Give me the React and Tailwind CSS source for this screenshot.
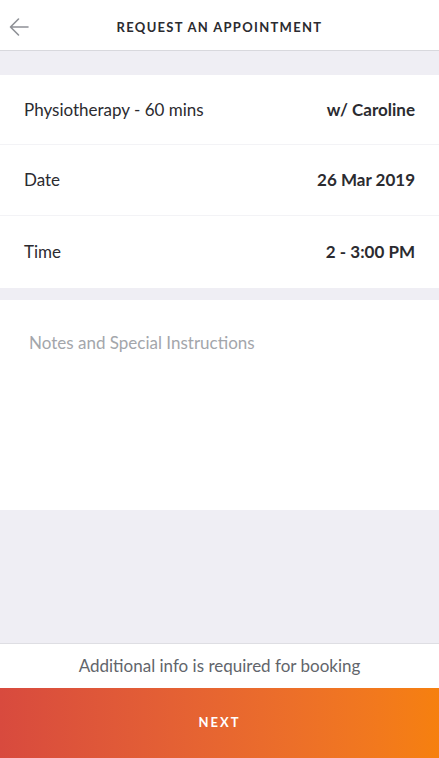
export default function App() {
  const font = { fontFamily: 'Lato, "Open Sans", sans-serif' };
  return (
    <div className="w-[439px] h-[758px] flex flex-col bg-[#efeef4] overflow-hidden" style={font}>
      <div className="h-[51px] bg-white border-b border-[#d8d8dd] flex items-center relative shrink-0">
        <svg className="absolute left-[9px] top-[17px]" width="20" height="20" viewBox="0 0 20 20" fill="none" stroke="#8e9096" strokeWidth="1.6" strokeLinecap="round" strokeLinejoin="round">
          <path d="M19 10H1.5M9.5 2L1.5 10L9.5 18" />
        </svg>
        <div className="flex-1 text-center text-[13px] font-bold tracking-[1.3px] text-[#2b2b30] pt-[6px]">REQUEST AN APPOINTMENT</div>
      </div>
      <div className="h-[24px] shrink-0" />
      <div className="bg-white shrink-0">
        <div className="h-[70px] flex items-center justify-between px-[24px] border-b border-[#f3f3f6]">
          <span className="text-[17px] text-[#2b2b30]">Physiotherapy - 60 mins</span>
          <span className="text-[17px] font-bold text-[#2b2b30]">w/ Caroline</span>
        </div>
        <div className="h-[71px] flex items-center justify-between px-[24px] border-b border-[#f3f3f6]">
          <span className="text-[17px] text-[#2b2b30]">Date</span>
          <span className="text-[17px] font-bold text-[#2b2b30]">26 Mar 2019</span>
        </div>
        <div className="h-[72px] flex items-center justify-between px-[24px]">
          <span className="text-[17px] text-[#2b2b30]">Time</span>
          <span className="text-[17px] font-bold text-[#2b2b30]">2 - 3:00 PM</span>
        </div>
      </div>
      <div className="h-[12px] shrink-0" />
      <div className="h-[210px] bg-white shrink-0 px-[29px] pt-[30px]">
        <div className="text-[17px] text-[#a3a6ab]">Notes and Special Instructions</div>
      </div>
      <div className="flex-1" />
      <div className="h-[45px] bg-white border-t border-[#dedee3] flex items-center justify-center shrink-0">
        <span className="text-[17px] text-[#62656b]">Additional info is required for booking</span>
      </div>
      <div className="h-[70px] shrink-0 bg-gradient-to-r from-[#d84a3e] to-[#f6800e] flex items-center justify-center">
        <span className="text-[13px] font-bold tracking-[2px] text-white">NEXT</span>
      </div>
    </div>
  );
}
